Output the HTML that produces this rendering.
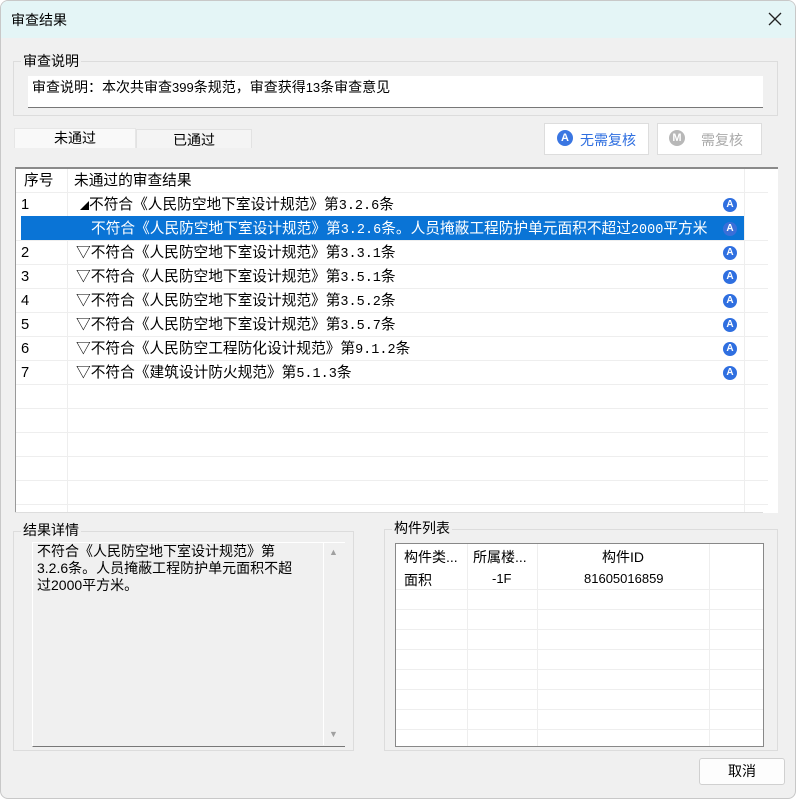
<!DOCTYPE html>
<html><head><meta charset="utf-8"><style>
*{box-sizing:border-box;margin:0;padding:0}
body{width:798px;height:799px;background:#fff;font-family:"Liberation Sans","Noto Sans CJK SC",sans-serif;font-size:14px;color:#000;position:relative;overflow:hidden}
.win{position:absolute;left:0;top:0;width:796px;height:799px;background:#f0f0f0;border:1px solid #c8c8c8;border-radius:8px;overflow:hidden}
.title{position:absolute;left:0;top:0;width:100%;height:37px;background:#e4f5f6}
.abs{position:absolute}
.grp{position:absolute;border:1px solid #dcdcdc}
.lg{position:absolute;background:#f0f0f0;padding:0 2px;font-size:14px;line-height:16px}
.row{position:absolute;left:0;height:24px;line-height:24px;white-space:nowrap;font-size:14.7px}
.m{font-family:"Liberation Mono",monospace;font-size:13.5px}
.ic{position:absolute;width:14px;height:14px;border-radius:50%;background:#2f6fe0;color:#fff;font-size:10px;line-height:14px;text-align:center;font-weight:bold}
</style></head><body>
<div class="win">
<div class="title"></div>
<div class="abs" style="left:10px;top:9px;font-size:14px">审查结果</div>
<svg class="abs" style="left:767px;top:11px" width="14" height="14"><path d="M1 1L13 13M13 1L1 13" stroke="#222" stroke-width="1.3"/></svg>

<div class="grp" style="left:12px;top:60px;width:765px;height:55px"></div>
<div class="lg" style="left:20px;top:52px">审查说明</div>
<div class="abs" style="left:27px;top:75px;width:735px;height:32px;background:#fff;border-bottom:1px solid #777"></div>
<div class="abs" style="left:31px;top:76px">审查说明：本次共审查<span style="font-size:13px">399</span>条规范，审查获得<span style="font-size:13px">13</span>条审查意见</div>

<div class="abs" style="left:13px;top:127px;width:122px;height:20px;background:#f9f9f9;border:1px solid #e6e6e6;border-bottom:none;text-align:center;line-height:18px">未通过</div>
<div class="abs" style="left:135px;top:128px;width:116px;height:19px;background:#f4f4f4;border:1px solid #e2e2e2;border-bottom:none;text-align:center;line-height:20px">已通过</div>

<div class="abs" style="left:543px;top:122px;width:105px;height:32px;background:#fff;border:1px solid #ddd"></div>
<div class="ic" style="left:556px;top:129px;width:16px;height:16px;line-height:16px;font-size:11px;background:#3a76e2">A</div>
<div class="abs" style="left:579px;top:129px;color:#2f6fe0">无需复核</div>
<div class="abs" style="left:656px;top:122px;width:105px;height:32px;background:#fff;border:1px solid #ddd"></div>
<div class="ic" style="left:668px;top:129px;width:16px;height:16px;line-height:16px;font-size:11px;background:#b8b8b8">M</div>
<div class="abs" style="left:700px;top:129px;color:#aaa">需复核</div>

<div class="abs" style="left:14px;top:166px;width:763px;height:346px;background:#fff;border-top:2px solid #8a8a8a;border-left:1px solid #999;overflow:hidden">
 <div class="abs" style="left:51px;top:0;width:1px;height:346px;background:#eee"></div>
 <div class="abs" style="left:728px;top:0;width:1px;height:346px;background:#eee"></div>
 <div class="row" style="top:0;left:8px">序号</div>
 <div class="row" style="top:0;left:58px">未通过的审查结果</div>
 <div class="abs" style="left:5px;top:47px;width:723px;height:24px;background:#0a74d6"></div>
 <div class="row" style="top:24px;left:5px">1</div>
 <div class="row" style="top:24px;left:64px"><span style="font-size:9px">◢</span>不符合《人民防空地下室设计规范》第<span class="m">3.2.6</span>条</div>
 <div class="row" style="top:48px;left:75px;color:#fff">不符合《人民防空地下室设计规范》第<span class="m">3.2.6</span>条。人员掩蔽工程防护单元面积不超过<span class="m">2000</span>平方米</div>
 <div class="row" style="top:72px;left:5px">2</div><div class="row" style="top:72px;left:60px">▽不符合《人民防空地下室设计规范》第<span class="m">3.3.1</span>条</div>
 <div class="row" style="top:96px;left:5px">3</div><div class="row" style="top:96px;left:60px">▽不符合《人民防空地下室设计规范》第<span class="m">3.5.1</span>条</div>
 <div class="row" style="top:120px;left:5px">4</div><div class="row" style="top:120px;left:60px">▽不符合《人民防空地下室设计规范》第<span class="m">3.5.2</span>条</div>
 <div class="row" style="top:144px;left:5px">5</div><div class="row" style="top:144px;left:60px">▽不符合《人民防空地下室设计规范》第<span class="m">3.5.7</span>条</div>
 <div class="row" style="top:168px;left:5px">6</div><div class="row" style="top:168px;left:60px">▽不符合《人民防空工程防化设计规范》第<span class="m">9.1.2</span>条</div>
 <div class="row" style="top:192px;left:5px">7</div><div class="row" style="top:192px;left:60px">▽不符合《建筑设计防火规范》第<span class="m">5.1.3</span>条</div>
 <div class="ic" style="left:707px;top:29px">A</div>
 <div class="ic" style="left:707px;top:53px;background:#3a6fd8">A</div>
 <div class="ic" style="left:707px;top:77px">A</div>
 <div class="ic" style="left:707px;top:101px">A</div>
 <div class="ic" style="left:707px;top:125px">A</div>
 <div class="ic" style="left:707px;top:149px">A</div>
 <div class="ic" style="left:707px;top:173px">A</div>
 <div class="ic" style="left:707px;top:197px">A</div>
 <div class="abs" style="left:0;top:23px;width:763px;height:1px;background:#eee"></div>
 <div class="abs" style="left:0;top:71px;width:763px;height:1px;background:#eee"></div>
 <div class="abs" style="left:0;top:95px;width:763px;height:1px;background:#eee"></div>
 <div class="abs" style="left:0;top:119px;width:763px;height:1px;background:#eee"></div>
 <div class="abs" style="left:0;top:143px;width:763px;height:1px;background:#eee"></div>
 <div class="abs" style="left:0;top:167px;width:763px;height:1px;background:#eee"></div>
 <div class="abs" style="left:0;top:191px;width:763px;height:1px;background:#eee"></div>
 <div class="abs" style="left:0;top:215px;width:763px;height:1px;background:#eee"></div>
 <div class="abs" style="left:0;top:239px;width:763px;height:1px;background:#eee"></div>
 <div class="abs" style="left:0;top:263px;width:763px;height:1px;background:#eee"></div>
 <div class="abs" style="left:0;top:287px;width:763px;height:1px;background:#eee"></div>
 <div class="abs" style="left:0;top:311px;width:763px;height:1px;background:#eee"></div>
 <div class="abs" style="left:0;top:335px;width:763px;height:1px;background:#eee"></div>
 <div class="abs" style="left:752px;top:0;width:11px;height:346px;background:#fff"></div>
</div>
<div class="abs" style="left:14px;top:511px;width:748px;height:1px;background:#ddd"></div>

<div class="grp" style="left:12px;top:530px;width:341px;height:220px"></div>
<div class="lg" style="left:20px;top:521px">结果详情</div>
<div class="abs" style="left:31px;top:541px;width:313px;height:205px;background:#f0f0f0;border-top:1px solid #fff;border-left:1px solid #fff;border-bottom:1px solid #777"></div>
<div class="abs" style="left:322px;top:542px;width:21px;height:202px;border-left:1px solid #fff"></div>
<div class="abs" style="left:328px;top:546px;color:#a0a0a0;font-size:9px">▲</div>
<div class="abs" style="left:328px;top:728px;color:#a0a0a0;font-size:9px">▼</div>
<div class="abs" style="left:36px;top:542px;width:285px;line-height:17px">不符合《人民防空地下室设计规范》第<br>3.2.6条。人员掩蔽工程防护单元面积不超<br>过2000平方米。</div>

<div class="grp" style="left:383px;top:528px;width:394px;height:222px"></div>
<div class="lg" style="left:391px;top:519px">构件列表</div>
<div class="abs" style="left:394px;top:542px;width:369px;height:204px;background:#fff;border:1px solid #888;overflow:hidden">
 <div class="abs" style="left:71px;top:0;width:1px;height:204px;background:#eee"></div>
 <div class="abs" style="left:141px;top:0;width:1px;height:204px;background:#eee"></div>
 <div class="abs" style="left:313px;top:0;width:1px;height:204px;background:#eee"></div>
 <div class="abs" style="left:8px;top:3px">构件类...</div>
 <div class="abs" style="left:77px;top:3px">所属楼...</div>
 <div class="abs" style="left:206px;top:3px">构件ID</div>
 <div class="abs" style="left:8px;top:26px">面积</div>
 <div class="abs" style="left:96px;top:27px;font-size:13px">-1F</div>
 <div class="abs" style="left:188px;top:27px;font-size:13px">81605016859</div>
 <div class="abs" style="left:0;top:45px;width:369px;height:1px;background:#eee"></div>
 <div class="abs" style="left:0;top:65px;width:369px;height:1px;background:#eee"></div>
 <div class="abs" style="left:0;top:85px;width:369px;height:1px;background:#eee"></div>
 <div class="abs" style="left:0;top:105px;width:369px;height:1px;background:#eee"></div>
 <div class="abs" style="left:0;top:125px;width:369px;height:1px;background:#eee"></div>
 <div class="abs" style="left:0;top:145px;width:369px;height:1px;background:#eee"></div>
 <div class="abs" style="left:0;top:165px;width:369px;height:1px;background:#eee"></div>
 <div class="abs" style="left:0;top:185px;width:369px;height:1px;background:#eee"></div>
</div>

<div class="abs" style="left:698px;top:757px;width:86px;height:27px;background:#fdfdfd;border:1px solid #d0d0d0;border-radius:3px;text-align:center;line-height:25px">取消</div>
</div>
</body></html>
